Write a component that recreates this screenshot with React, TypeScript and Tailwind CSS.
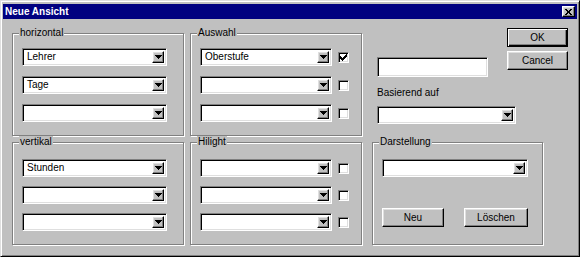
import type { ReactNode } from "react";

const raised =
  "border border-t-white border-l-white border-r-black border-b-black shadow-[inset_-1px_-1px_0_#808080,inset_1px_1px_0_#dfdfdf]";
const sunken =
  "border border-t-[#808080] border-l-[#808080] border-r-white border-b-white shadow-[inset_1px_1px_0_#000,inset_-1px_-1px_0_#dfdfdf]";

function Arrow() {
  return (
    <svg width="7" height="4" viewBox="0 0 7 4" shapeRendering="crispEdges" aria-hidden="true">
      <path d="M0 0h7v1h-1v1h-1v1h-1v1h-1v-1h-1v-1h-1v-1h-1z" fill="#000" />
    </svg>
  );
}

function Combo({ value = "", className = "" }: { value?: string; className?: string }) {
  return (
    <div className={`flex h-[18px] shrink-0 items-stretch bg-white ${sunken} ${className}`}>
      <span className="min-w-0 flex-1 truncate pl-[4px] text-[10px] leading-[16px]">{value}</span>
      <span
        className={`my-[2px] mr-[2px] flex w-[12px] items-center justify-center bg-[#c0c0c0] ${raised}`}
      >
        <Arrow />
      </span>
    </div>
  );
}

function Check({ checked = false }: { checked?: boolean }) {
  return (
    <span className={`flex h-[11px] w-[11px] shrink-0 items-center justify-center bg-white ${sunken}`}>
      {checked && (
        <svg width="7" height="7" viewBox="0 0 7 7" shapeRendering="crispEdges" aria-hidden="true">
          <path
            d="M6 0h1v3h-1v1h-1v1h-1v1h-1v1h-1v-1h-1v-1h-1v-3h1v1h1v1h1v-1h1v-1h1z"
            fill="#000"
          />
        </svg>
      )}
    </span>
  );
}

function Button({
  children,
  className = "",
  isDefault = false,
}: {
  children: ReactNode;
  className?: string;
  isDefault?: boolean;
}) {
  const frame = isDefault
    ? "border border-black shadow-[inset_1px_1px_0_#fff,inset_-1px_-1px_0_#000,inset_-2px_-2px_0_#808080]"
    : raised;
  return (
    <button
      type="button"
      className={`flex h-[19px] items-center justify-center bg-[#c0c0c0] text-[10px] leading-none text-black ${frame} ${className}`}
    >
      {children}
    </button>
  );
}

function Group({
  label,
  className = "",
  children,
}: {
  label: string;
  className?: string;
  children?: ReactNode;
}) {
  return (
    <fieldset
      className={`h-[109px] border border-[#808080] shadow-[1px_1px_0_#fff,inset_1px_1px_0_#fff] ${className}`}
    >
      <legend className="ml-[6px] bg-[#c0c0c0] px-[1px] text-[10px] leading-[12px]">{label}</legend>
      {children}
    </fieldset>
  );
}

export default function App() {
  return (
    <div className="h-[257px] w-[580px] bg-[#c0c0c0] font-['Liberation_Sans',Arial,sans-serif] text-black">
      <div
        className={`flex h-[257px] w-[580px] flex-col border border-t-[#dfdfdf] border-l-[#dfdfdf] border-r-black border-b-black p-[2px] shadow-[inset_1px_1px_0_#fff,inset_-1px_-1px_0_#808080]`}
      >
        <div className="mt-[1px] flex h-[15px] items-center justify-between bg-[#000080] pl-[2px] pr-[2px]">
          <span className="text-[10px] font-bold leading-none text-white">Neue Ansicht</span>
          <span className={`flex h-[11px] w-[13px] items-center justify-center bg-[#c0c0c0] ${raised}`}>
            <svg width="7" height="6" viewBox="0 0 7 6" shapeRendering="crispEdges" aria-hidden="true">
              <path
                d="M0 0h2v1h1v1h1v-1h1v-1h2v1h-1v1h-1v2h1v1h1v1h-2v-1h-1v-1h-1v1h-1v1h-2v-1h1v-1h1v-2h-1v-1h-1z"
                fill="#000"
              />
            </svg>
          </span>
        </div>

        <div className="flex pl-[9px] pt-[8px]">
          <div className="grid grid-cols-[172px_172px] gap-x-[6px]">
            <Group label="horizontal">
              <div className="flex flex-col gap-[10px] pl-[9px] pt-[9px]">
                <Combo value="Lehrer" className="w-[145px]" />
                <Combo value="Tage" className="w-[145px]" />
                <Combo className="w-[145px]" />
              </div>
            </Group>
            <Group label="Auswahl">
              <div className="flex flex-col gap-[10px] pl-[9px] pt-[9px]">
                {["Oberstufe", "", ""].map((v, i) => (
                  <div key={i} className="flex items-center gap-[6px]">
                    <Combo value={v} className="w-[132px]" />
                    <Check checked={i === 0} />
                  </div>
                ))}
              </div>
            </Group>
            <Group label="vertikal">
              <div className="flex flex-col gap-[9px] pl-[9px] pt-[11px]">
                <Combo value="Stunden" className="w-[145px]" />
                <Combo className="w-[145px]" />
                <Combo className="w-[145px]" />
              </div>
            </Group>
            <Group label="Hilight">
              <div className="flex flex-col gap-[9px] pl-[9px] pt-[11px]">
                {[0, 1, 2].map((i) => (
                  <div key={i} className="flex items-center gap-[6px]">
                    <Combo className="w-[132px]" />
                    <Check />
                  </div>
                ))}
              </div>
            </Group>
          </div>

          <div className="ml-[10px] flex w-[197px] flex-col">
            <div className="flex items-start">
              <div className="ml-[5px] mt-[30px] flex w-[130px] flex-col">
                <div className={`h-[20px] w-[111px] bg-white ${sunken}`} />
                <span className="mt-[9px] h-[13px] text-[10px] leading-[13px]">Basierend auf</span>
              </div>
              <div className="mt-[1px] flex flex-col gap-[4px]">
                <Button isDefault className="w-[61px]">
                  OK
                </Button>
                <Button className="w-[61px]">Cancel</Button>
              </div>
            </div>
            <Combo className="ml-[5px] mt-[7px] w-[139px]" />
            <Group label="Darstellung" className="mt-[12px] w-[171px]">
              <div className="flex w-[155px] flex-col pl-[9px] pt-[11px]">
                <Combo className="w-[146px]" />
                <div className="mt-[31px] flex w-[146px] justify-between">
                  <Button className="w-[62px]">Neu</Button>
                  <Button className="w-[64px]">Löschen</Button>
                </div>
              </div>
            </Group>
          </div>
        </div>
      </div>
    </div>
  );
}
